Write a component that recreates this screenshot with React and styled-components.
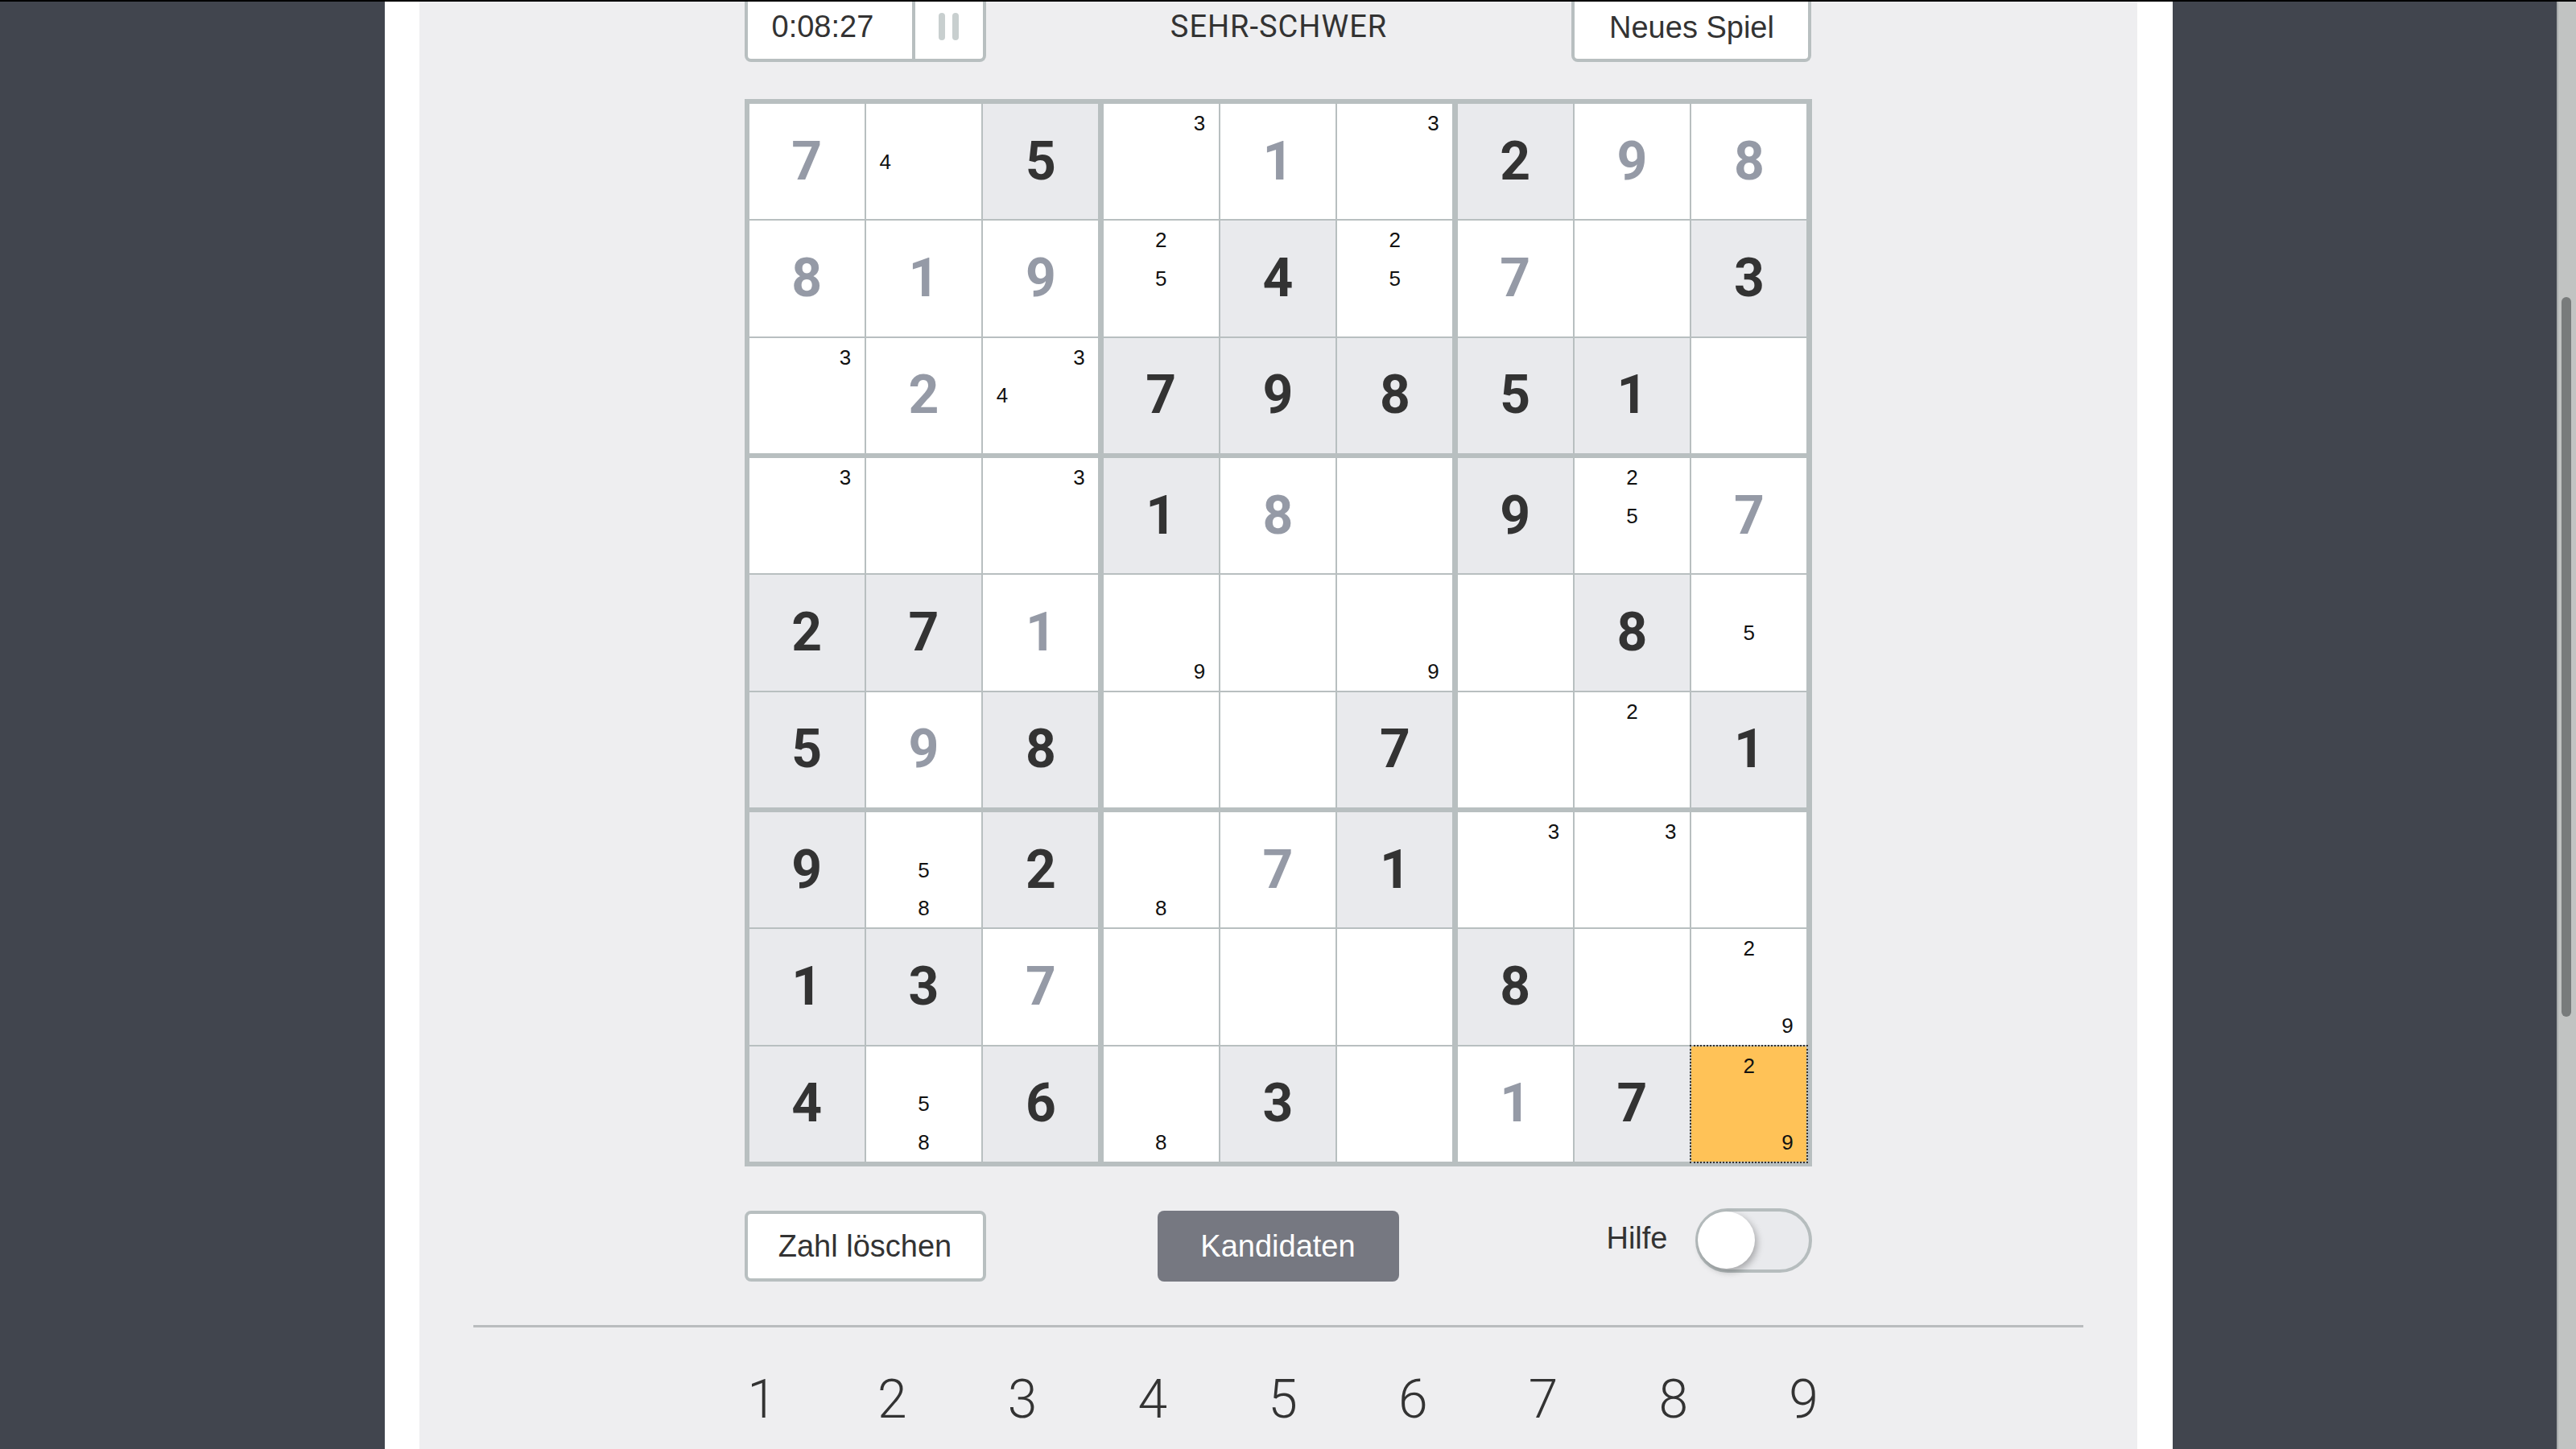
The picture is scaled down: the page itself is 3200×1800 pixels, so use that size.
import React from "react";
import styled, { createGlobalStyle } from "styled-components";

const GlobalStyle = createGlobalStyle`
  html, body {
    margin: 0;
    padding: 0;
    height: 100%;
    overflow: hidden;
    background: #41454e;
  }
  #root { height: 100%; }
  * { box-sizing: border-box; }
`;

const SANS = `"Liberation Sans", Arial, sans-serif`;
const ROBOTO = `Roboto, "Liberation Sans", sans-serif`;
const LINE = "#b8bfc0";

const Viewport = styled.div`
  display: flex;
  flex-direction: column;
  height: 100vh;
  width: 100vw;
`;

const TopEdge = styled.div`
  height: 2px;
  flex: none;
  background: #000;
`;

const Body = styled.div`
  flex: 1;
  min-height: 0;
  display: flex;
`;

const Backdrop = styled.div`
  flex: 1;
  min-width: 0;
  background: #41454e;
  display: flex;
  justify-content: center;
  overflow: hidden;
`;

const Sheet = styled.div`
  width: 2221px;
  flex: none;
  height: 100%;
  background: #ffffff;
  padding: 0 44px 0 43px;
`;

const Panel = styled.div`
  height: 100%;
  background: #eeeef0;
  display: flex;
  flex-direction: column;
  align-items: center;
`;

const Game = styled.div`
  width: 1326px;
  display: flex;
  flex-direction: column;
`;

const Toolbar = styled.div`
  height: 75px;
  display: flex;
  justify-content: space-between;
  align-items: flex-start;
`;

const TopBox = styled.div`
  height: 75px;
  width: ${(p) => p.$width}px;
  background: #fff;
  border: 4px solid ${LINE};
  border-top: none;
  border-radius: 0 0 8px 8px;
  display: flex;
  font-family: ${SANS};
  font-size: 38px;
  color: #333;
`;

const TimerText = styled.div`
  width: 204px;
  padding: 0 0 9px 30px;
  display: flex;
  align-items: center;
  line-height: 1;
`;

const PauseButton = styled.div`
  flex: 1;
  border-left: 4px solid ${LINE};
  display: flex;
  align-items: center;
  justify-content: center;
  gap: 9px;
  padding-bottom: 9px;
`;

const PauseBar = styled.span`
  width: 8px;
  height: 34px;
  border-radius: 4px;
  background: #c8cfcf;
`;

const Title = styled.div`
  height: 71px;
  padding-bottom: 9px;
  display: flex;
  align-items: center;
  font-family: ${ROBOTO};
  font-size: 38px;
  letter-spacing: 1px;
  color: #333;
`;

const NewGameLabel = styled.div`
  flex: 1;
  display: flex;
  align-items: center;
  justify-content: center;
  padding-bottom: 7px;
  line-height: 1;
`;

const Board = styled.div`
  margin-top: 46px;
  width: 1326px;
  height: 1326px;
  padding: 6px;
  gap: 6px;
  background: ${LINE};
  display: grid;
  grid-template-columns: repeat(3, 1fr);
  grid-template-rows: repeat(3, 1fr);
`;

const Box = styled.div`
  display: grid;
  gap: 2px;
  grid-template-columns: repeat(3, 1fr);
  grid-template-rows: repeat(3, 1fr);
`;

const Cell = styled.div`
  position: relative;
  display: flex;
  align-items: center;
  justify-content: center;
  background: ${(p) =>
    p.$selected ? "#ffc257" : p.$given ? "#e9eaed" : "#ffffff"};
  ${(p) =>
    p.$selected &&
    `
    outline: 2px dotted #333;
    z-index: 1;
  `}
`;

const Digit = styled.span`
  font-family: ${ROBOTO};
  font-weight: 700;
  font-size: 66px;
  line-height: 1;
  color: ${(p) => (p.$given ? "#333333" : "#959aa6")};
`;

const CandidateGrid = styled.div`
  width: 100%;
  height: 100%;
  display: grid;
  grid-template-columns: repeat(3, 1fr);
  grid-template-rows: repeat(3, 1fr);
`;

const Candidate = styled.span`
  grid-column: ${(p) => ((p.$n - 1) % 3) + 1};
  grid-row: ${(p) => Math.floor((p.$n - 1) / 3) + 1};
  display: flex;
  align-items: center;
  justify-content: center;
  font-family: ${SANS};
  font-size: 26px;
  line-height: 1;
  color: #111;
`;

const Controls = styled.div`
  margin-top: 55px;
  height: 88px;
  display: flex;
  justify-content: space-between;
  align-items: flex-start;
`;

const Button = styled.div`
  width: 300px;
  height: 88px;
  border-radius: 8px;
  display: flex;
  align-items: center;
  justify-content: center;
  font-family: ${SANS};
  font-size: 38px;
  line-height: 1;
  background: ${(p) => (p.$primary ? "#767881" : "#ffffff")};
  color: ${(p) => (p.$primary ? "#ffffff" : "#333333")};
  border: ${(p) => (p.$primary ? "none" : `4px solid ${LINE}`)};
`;

const HelpGroup = styled.div`
  width: 300px;
  margin-top: -3px;
  display: flex;
  justify-content: flex-end;
  align-items: center;
  gap: 34px;
`;

const HelpLabel = styled.span`
  font-family: ${SANS};
  font-size: 38px;
  line-height: 1;
  color: #333;
  padding-bottom: 6px;
`;

const Track = styled.div`
  position: relative;
  width: 145px;
  height: 80px;
  border-radius: 40px;
  border: 4px solid #b6bdbe;
  background: #e9eaed;
`;

const Knob = styled.span`
  position: absolute;
  left: -1px;
  top: 0px;
  width: 71px;
  height: 71px;
  border-radius: 50%;
  background: #ffffff;
  box-shadow: 3px 4px 8px rgba(0, 0, 0, 0.28);
`;

const Divider = styled.div`
  margin-top: 54px;
  width: 2000px;
  height: 3px;
  background: #b9bcbe;
  flex: none;
`;

const NumberPad = styled.div`
  margin-top: 57px;
  padding-left: 12px;
  display: grid;
  grid-template-columns: repeat(9, 161.75px);
`;

const PadKey = styled.span`
  text-align: center;
  font-family: ${ROBOTO};
  font-weight: 300;
  font-size: 66px;
  line-height: 1;
  color: #333;
`;

const Scrollbar = styled.div`
  width: 24px;
  flex: none;
  background: #c1c3c2;
  border-left: 2px solid #a9acac;
  padding-left: 4px;
`;

const Thumb = styled.div`
  margin-top: 367px;
  width: 12px;
  height: 894px;
  border-radius: 6px;
  background: #787b7b;
`;

const ROWS = [
  ["u7", "c4", "g5", "c3", "u1", "c3", "g2", "u9", "u8"],
  ["u8", "u1", "u9", "c25", "g4", "c25", "u7", "", "g3"],
  ["c3", "u2", "c34", "g7", "g9", "g8", "g5", "g1", ""],
  ["c3", "", "c3", "g1", "u8", "", "g9", "c25", "u7"],
  ["g2", "g7", "u1", "c9", "", "c9", "", "g8", "c5"],
  ["g5", "u9", "g8", "", "", "g7", "", "c2", "g1"],
  ["g9", "c58", "g2", "c8", "u7", "g1", "c3", "c3", ""],
  ["g1", "g3", "u7", "", "", "", "g8", "", "c29"],
  ["g4", "c58", "g6", "c8", "g3", "", "u1", "g7", "s29"],
];

function SudokuCell({ code }) {
  const kind = code[0];
  const rest = code.slice(1);
  if (kind === "g" || kind === "u") {
    return (
      <Cell $given={kind === "g"}>
        <Digit $given={kind === "g"}>{rest}</Digit>
      </Cell>
    );
  }
  if (kind === "c" || kind === "s") {
    return (
      <Cell $selected={kind === "s"}>
        <CandidateGrid>
          {rest.split("").map((n) => (
            <Candidate key={n} $n={Number(n)}>
              {n}
            </Candidate>
          ))}
        </CandidateGrid>
      </Cell>
    );
  }
  return <Cell />;
}

export default function App() {
  const boxes = Array.from({ length: 9 }, (_, b) =>
    Array.from({ length: 9 }, (_, k) => {
      const r = Math.floor(b / 3) * 3 + Math.floor(k / 3);
      const c = (b % 3) * 3 + (k % 3);
      return ROWS[r][c] || "";
    })
  );

  return (
    <>
      <GlobalStyle />
      <Viewport>
        <TopEdge />
        <Body>
          <Backdrop>
            <Sheet>
              <Panel>
                <Game>
                  <Toolbar>
                    <TopBox $width={300}>
                      <TimerText>0:08:27</TimerText>
                      <PauseButton>
                        <PauseBar />
                        <PauseBar />
                      </PauseButton>
                    </TopBox>
                    <Title>SEHR-SCHWER</Title>
                    <TopBox $width={298}>
                      <NewGameLabel>Neues Spiel</NewGameLabel>
                    </TopBox>
                  </Toolbar>
                  <Board>
                    {boxes.map((cells, b) => (
                      <Box key={b}>
                        {cells.map((code, k) => (
                          <SudokuCell key={k} code={code} />
                        ))}
                      </Box>
                    ))}
                  </Board>
                  <Controls>
                    <Button>Zahl löschen</Button>
                    <Button $primary>Kandidaten</Button>
                    <HelpGroup>
                      <HelpLabel>Hilfe</HelpLabel>
                      <Track>
                        <Knob />
                      </Track>
                    </HelpGroup>
                  </Controls>
                </Game>
                <Divider />
                <NumberPad>
                  {[1, 2, 3, 4, 5, 6, 7, 8, 9].map((n) => (
                    <PadKey key={n}>{n}</PadKey>
                  ))}
                </NumberPad>
              </Panel>
            </Sheet>
          </Backdrop>
          <Scrollbar>
            <Thumb />
          </Scrollbar>
        </Body>
      </Viewport>
    </>
  );
}
